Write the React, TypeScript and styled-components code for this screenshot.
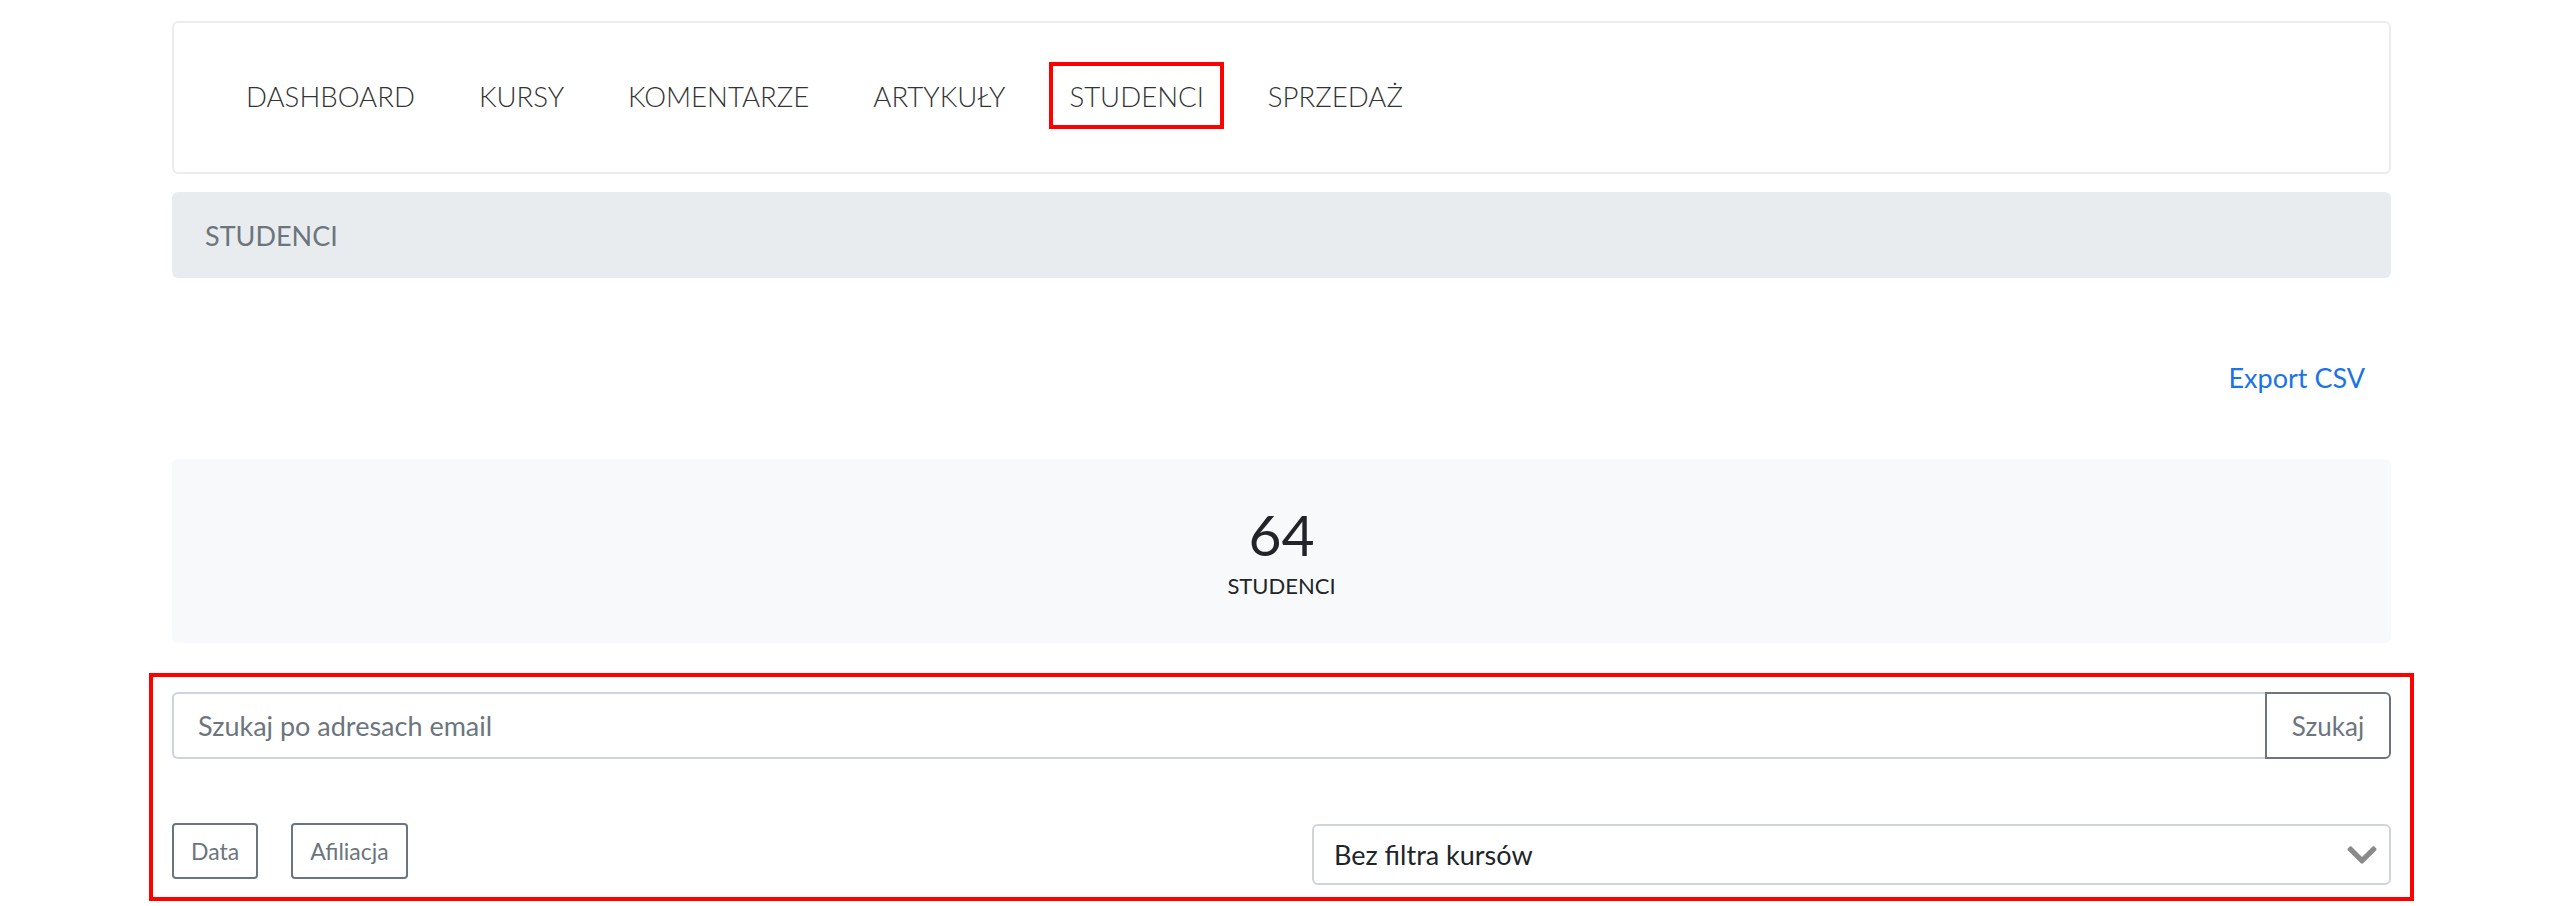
import styled, { createGlobalStyle } from 'styled-components'
import { FaChevronDown } from 'react-icons/fa'

const GlobalStyle = createGlobalStyle`
  html, body {
    margin: 0;
    padding: 0;
    background: #fff;
    font-family: Lato, "Open Sans", sans-serif;
    color: #212529;
  }
  * {
    box-sizing: border-box;
  }
`

const navItems = ['DASHBOARD', 'KURSY', 'KOMENTARZE', 'ARTYKUŁY', 'STUDENCI', 'SPRZEDAŻ']

const App = () => (
  <>
    <GlobalStyle />
    <Page>
      <NavCard>
        <NavList>
          {navItems.map((item) => (
            <NavItem key={item} marked={item === 'STUDENCI'}>
              {item}
            </NavItem>
          ))}
        </NavList>
      </NavCard>

      <Breadcrumb>STUDENCI</Breadcrumb>

      <ExportRow>
        <ExportLink>Export CSV</ExportLink>
      </ExportRow>

      <StatBox>
        <StatValue>64</StatValue>
        <StatLabel>STUDENCI</StatLabel>
      </StatBox>

      <SearchSection>
        <SearchGroup>
          <SearchInput placeholder="Szukaj po adresach email" />
          <SearchButton>Szukaj</SearchButton>
        </SearchGroup>

        <FilterRow>
          <SortButtons>
            <SortButton>Data</SortButton>
            <SortButton>Afiliacja</SortButton>
          </SortButtons>
          <CourseSelect>
            <span>Bez filtra kursów</span>
            <FaChevronDown size={34} />
          </CourseSelect>
        </FilterRow>
      </SearchSection>
    </Page>
  </>
)

export default App

type NavItemProps = {
  marked?: boolean
}

const Page = styled.div`
  padding: 21px 177px 0 172px;
`

const NavCard = styled.div`
  height: 153px;
  border: 2px solid #ececec;
  border-radius: 6px;
  padding: 39px 0 0 52px;
`

const NavList = styled.div`
  display: flex;
  gap: 24px;
`

const NavItem = styled.div.withConfig({
  shouldForwardProp: (prop) => prop !== 'marked',
})<NavItemProps>`
  font-size: 27.6px;
  font-weight: 300;
  line-height: 42px;
  color: #333;
  padding: 14px 20px 11px;
  box-shadow: ${({ marked }) => (marked ? 'inset 0 0 0 4px #ff0000' : 'none')};
`

const Breadcrumb = styled.div`
  margin-top: 18px;
  height: 86px;
  display: flex;
  align-items: center;
  padding-left: 33px;
  background: #e9ecef;
  border-radius: 6px;
  font-size: 27px;
  color: #6c757d;
`

const ExportRow = styled.div`
  display: flex;
  justify-content: flex-end;
  margin-top: 80px;
  padding-right: 26px;
`

const ExportLink = styled.a`
  font-size: 27px;
  line-height: 39px;
  color: #1a73e8;
  cursor: pointer;
`

const StatBox = styled.div`
  margin-top: 62px;
  height: 184px;
  background: #f8f9fa;
  border-radius: 6px;
  display: flex;
  flex-direction: column;
  align-items: center;
  justify-content: center;
`

const StatValue = styled.div`
  font-size: 57px;
  line-height: 1.2;
  color: #212529;
`

const StatLabel = styled.div`
  font-size: 22px;
  line-height: 1.5;
  color: #212529;
`

const SearchSection = styled.div`
  margin: 30px -23px 0;
  border: 4px solid #ff0000;
  padding: 15px 19px 12px;
`

const SearchGroup = styled.div`
  display: flex;
  height: 67px;
`

const SearchInput = styled.input`
  flex: 1;
  min-width: 0;
  border: 2px solid #ced4da;
  border-right: none;
  border-radius: 6px 0 0 6px;
  padding: 0 24px;
  font-family: Lato, sans-serif;
  font-size: 27px;
  color: #212529;
  outline: none;
  &::placeholder {
    color: #6c757d;
  }
`

const SearchButton = styled.button`
  width: 126px;
  border: 2px solid #6c757d;
  border-radius: 0 6px 6px 0;
  background: #fff;
  font-family: Lato, sans-serif;
  font-size: 26px;
  color: #6c757d;
`

const FilterRow = styled.div`
  display: grid;
  grid-template-columns: 1fr 1fr;
  column-gap: 61px;
  align-items: start;
  margin-top: 64px;
`

const SortButtons = styled.div`
  display: flex;
  gap: 33px;
`

const SortButton = styled.button`
  height: 56px;
  padding: 0 17px;
  border: 2px solid #6c757d;
  border-radius: 4px;
  background: #fff;
  font-family: Lato, sans-serif;
  font-size: 23px;
  color: #6c757d;
`

const CourseSelect = styled.div`
  margin-top: 1px;
  height: 61px;
  display: flex;
  align-items: center;
  justify-content: space-between;
  padding: 0 10px 0 20px;
  border: 2px solid #ced4da;
  border-radius: 6px;
  font-size: 27px;
  color: #212529;
  svg {
    color: #8a8a8a;
  }
`
